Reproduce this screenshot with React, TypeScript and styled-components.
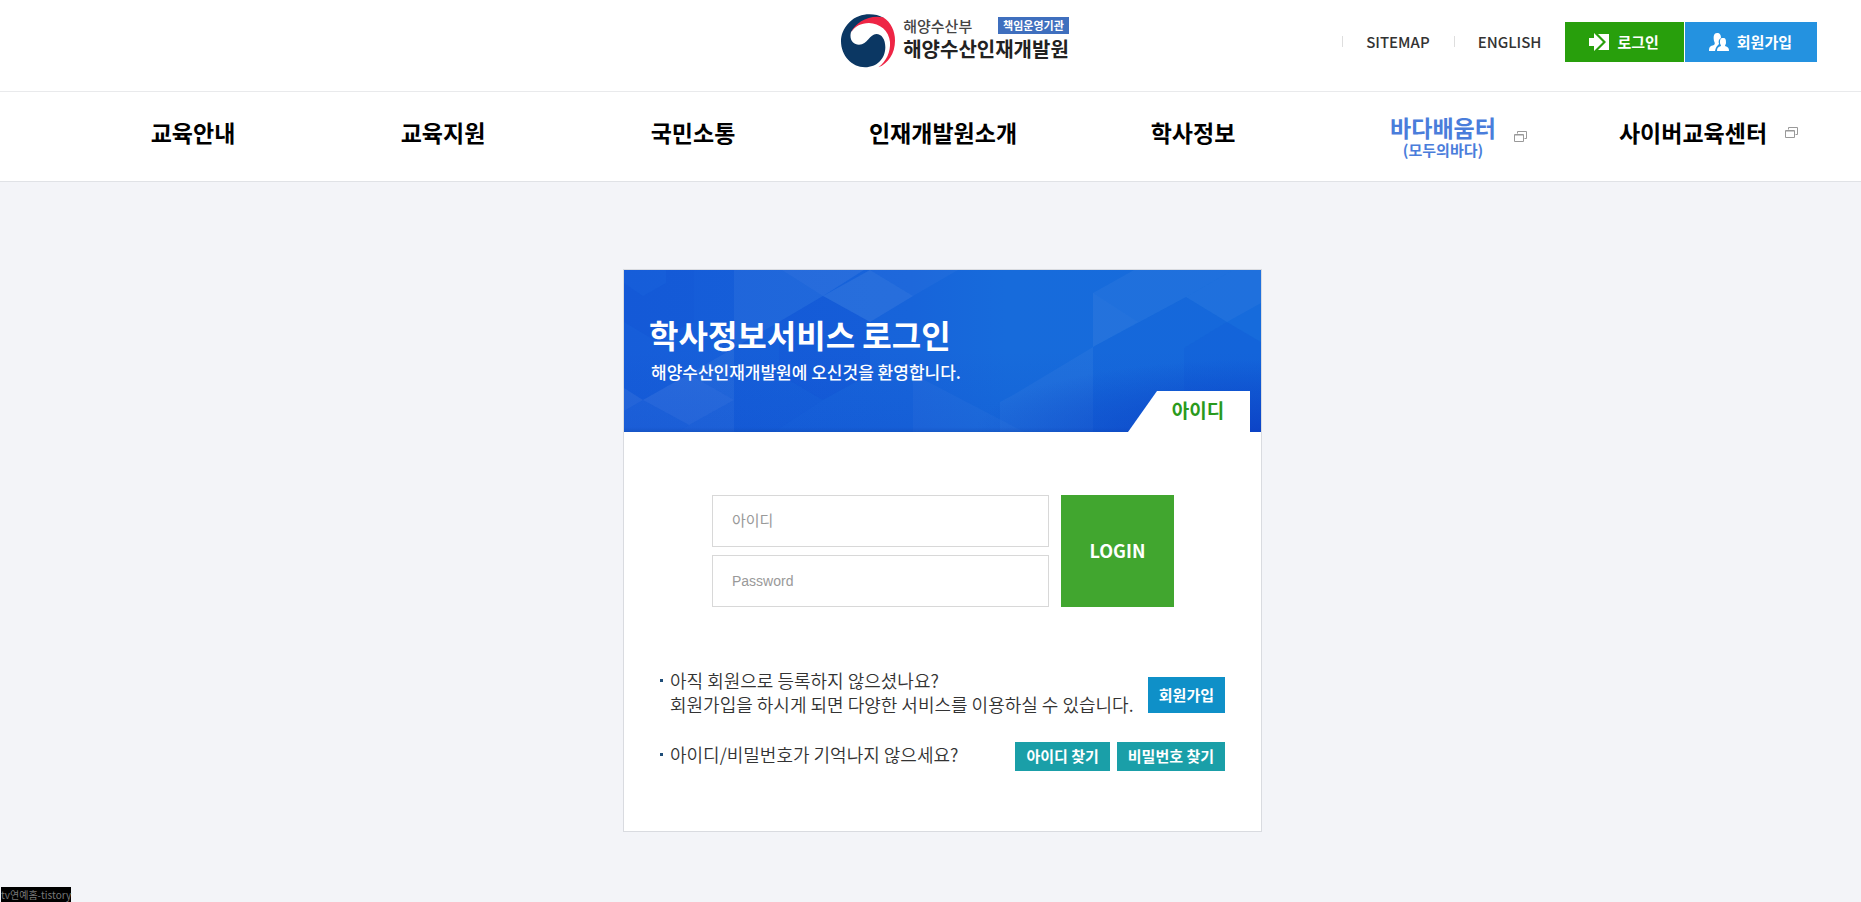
import React from "react";
import styled, { createGlobalStyle } from "styled-components";

const GlobalStyle = createGlobalStyle`
  *, *::before, *::after { box-sizing: border-box; }
  body {
    margin: 0;
    background: #f3f4f8;
    color: #444;
    font-family: "Noto Sans CJK KR", "Noto Sans", sans-serif;
  }
  a { color: inherit; text-decoration: none; }
  h1, p, ul { margin: 0; padding: 0; }
  ul { list-style: none; }
`;

const Page = styled.div`
  display: flex;
  flex-direction: column;
  min-height: 100vh;
`;

const Header = styled.header`
  display: grid;
  grid-template-columns: 1fr auto 1fr;
  height: 92px;
  padding: 0 44px 0 93px;
  background: #fff;
  border-bottom: 1px solid #e9eaec;
`;

const Logo = styled.a`
  grid-column: 2;
  display: flex;
  gap: 8px;
  align-self: start;
  padding-top: 14px;
`;

const LogoText = styled.span`
  display: flex;
  flex-direction: column;
`;

const LogoTop = styled.span`
  display: flex;
  align-items: center;
  justify-content: space-between;
  height: 22px;
  font-size: 15px;
  font-weight: 500;
  color: #444;
`;

const Badge = styled.span`
  padding: 0 5px;
  background: #3f6fbe;
  color: #fff;
  font-size: 11px;
  font-weight: 700;
  line-height: 17px;
`;

const LogoName = styled.strong`
  font-size: 20px;
  font-weight: 700;
  line-height: 26px;
  color: #222;
`;

const Utility = styled.nav`
  display: flex;
  justify-content: flex-end;
  align-items: center;
  align-self: start;
  height: 40px;
  margin-top: 22px;
`;

const UtilityLink = styled.a`
  display: flex;
  align-items: center;
  padding: 0 24px 2px 0;
  color: #333;
  font-size: 15px;
  font-weight: 500;
  white-space: nowrap;

  &::before {
    content: "";
    width: 1px;
    height: 11px;
    margin-right: 23px;
    background: #dedede;
  }
`;

const UtilityButton = styled.a<{ $color: string }>`
  display: flex;
  align-items: center;
  gap: 8px;
  height: 40px;
  padding: 0 25px 1px 24px;
  margin-right: 1px;
  background: ${(p) => p.$color};
  color: #fff;
  font-size: 15px;
  font-weight: 700;
  white-space: nowrap;

  &:last-child { margin-right: 0; }
`;

const MainNav = styled.nav`
  background: #fff;
  border-bottom: 1px solid #e0e2e6;
`;

const MenuList = styled.ul`
  display: flex;
  height: 89px;
  padding: 0 43px 0 68px;
`;

const MenuItem = styled.li<{ $stacked: boolean }>`
  flex: 1;
  display: grid;
  grid-template-columns: 1fr auto 1fr;
  align-items: center;
  padding-bottom: ${(p) => (p.$stacked ? 0 : 9)}px;
`;

const MenuLink = styled.a<{ $accent?: boolean }>`
  grid-column: 2;
  display: flex;
  flex-direction: column;
  align-items: center;
  color: ${(p) => (p.$accent ? "#4a7ddb" : "#000")};
  font-size: 23px;
  font-weight: 700;
  line-height: 26px;
  white-space: nowrap;

  small {
    font-size: 15px;
    font-weight: 700;
    line-height: 20px;
  }
`;

const NewWindow = styled.svg`
  width: 13px;
  height: 11px;
  margin-left: 18px;
`;

const Main = styled.main`
  flex: 1;
  display: flex;
  justify-content: center;
  align-items: flex-start;
  padding: 87px 0 40px 24px;
`;

const Card = styled.section`
  width: 639px;
  background: #fff;
  border: 1px solid #d9dbe0;
`;

const Banner = styled.div`
  position: relative;
  height: 162px;
  padding: 41px 25px 0;
  color: #fff;
  overflow: hidden;
`;

const BannerArt = styled.svg`
  position: absolute;
  inset: 0;
  width: 100%;
  height: 100%;
`;

const Title = styled.h1`
  position: relative;
  font-size: 32px;
  font-weight: 700;
  line-height: 46px;
`;

const Subtitle = styled.p`
  position: relative;
  padding-left: 2px;
  font-size: 17px;
  font-weight: 500;
  line-height: 30px;
`;

const Tab = styled.a`
  position: absolute;
  right: 11px;
  bottom: 0;
  width: 122px;
  height: 41px;
  padding-left: 18px;
  background: #fff;
  clip-path: polygon(29px 0, 100% 0, 100% 100%, 0 100%);
  color: #2a9a1c;
  font-size: 19px;
  font-weight: 700;
  line-height: 38px;
  text-align: center;
`;

const LoginForm = styled.form`
  display: flex;
  gap: 12px;
  padding: 63px 87px 0 88px;
`;

const Fields = styled.div`
  flex: 1;
  display: flex;
  flex-direction: column;
  gap: 8px;
`;

const Field = styled.input`
  width: 100%;
  height: 52px;
  padding: 0 19px;
  border: 1px solid #d8d8d8;
  background: #fff;
  color: #333;
  font-family: "Noto Sans CJK KR", sans-serif;
  font-size: 15px;

  &::placeholder { color: #999; opacity: 1; }

  &[type="text"] { padding-bottom: 3px; }

  &[type="password"] {
    font-family: "Liberation Sans", sans-serif;
    font-size: 14px;
  }
`;

const LoginButton = styled.button`
  width: 113px;
  padding: 0 0 3px;
  border: 0;
  background: #41a62f;
  color: #fff;
  font-family: inherit;
  font-size: 18px;
  font-weight: 700;
`;

const Notes = styled.ul`
  display: flex;
  flex-direction: column;
  gap: 26px;
  padding: 61px 36px 60px;
`;

const Note = styled.li`
  display: flex;
  justify-content: space-between;
  align-items: flex-start;
`;

const NoteText = styled.p`
  position: relative;
  padding-left: 10px;
  color: #333;
  font-size: 18px;
  font-weight: 350;
  line-height: 24px;
  white-space: nowrap;

  &::before {
    content: "";
    position: absolute;
    left: 0;
    top: 11px;
    width: 3px;
    height: 3px;
    background: #1f4e79;
  }
`;

const Actions = styled.div`
  display: flex;
  gap: 7px;
`;

const ActionButton = styled.button<{ $tall?: boolean }>`
  height: ${(p) => (p.$tall ? 36 : 29)}px;
  margin-top: ${(p) => (p.$tall ? 9 : 0)}px;
  padding: 0 11px 2px;
  border: 0;
  background: ${(p) => (p.$tall ? "#0f90c8" : "#1a9fa8")};
  color: #fff;
  font-family: inherit;
  font-size: 15px;
  font-weight: 700;
  white-space: nowrap;
`;

const Tag = styled.a`
  align-self: flex-start;
  margin-left: 1px;
  background: #000;
  color: #777;
  font-size: 10px;
  line-height: 15px;
`;

const Emblem = () => (
  <svg width="54" height="54" viewBox="0 0 162 162" aria-hidden="true">
    <path
      d="M128 11C96-6 52-2 26 24C6 44 0 64 0 82C0 124 32 160 72 160C108 160 133 134 133 100C133 76 122 60 106 60C86 60 80 92 54 92C36 92 24 76 30 54C50 22 84 12 128 11Z"
      fill="#0b3763"
    />
    <path
      d="M29 57C44 24 84 2 126 10C150 24 162 52 162 80C162 118 142 148 112 160C136 142 149 114 147 84C144 50 116 28 84 27C60 27 40 38 29 57Z"
      fill="#ee2545"
    />
  </svg>
);

const LoginIcon = () => (
  <svg width="20" height="18" viewBox="0 0 20 18" fill="#fff" aria-hidden="true">
    <path d="M0 5H5V0L14 9L5 18V13H0Z" />
    <path d="M9 1H20V17H9L11 15L17 9Z" />
  </svg>
);

const MembersIcon = () => (
  <svg width="20" height="18" viewBox="0 0 20 18" fill="#fff" aria-hidden="true">
    <path d="M8 0C11 0 12 2 12 5C10 6 9 8 10 11C8 13 7 14 6 18H0C0 14 1 13 5 12C6 11 6 10 5 8C4 3 5 0 8 0Z" />
    <path d="M14 5C17 5 17 7 17 10C17 11 16 12 16 13C19 14 20 15 20 18H8C8 15 9 14 12 13C12 12 11 11 11 10C11 7 11 5 14 5Z" />
  </svg>
);

const NewWindowIcon = () => (
  <NewWindow viewBox="0 0 13 11" fill="none" stroke="#999" aria-hidden="true">
    <path d="M3.5 2.5V.5H12.5V7.5H10.5" />
    <path d="M.5 3.5H9.5V10.5H.5Z" />
    <path d="M1 4H9" />
  </NewWindow>
);

const BannerPattern = () => (
  <BannerArt viewBox="0 0 637 162" preserveAspectRatio="none" aria-hidden="true">
    <defs>
      <linearGradient id="base" x1="0" y1="0" x2="1" y2="0">
        <stop offset="0" stopColor="#165dd9" />
        <stop offset=".45" stopColor="#1764da" />
        <stop offset=".6" stopColor="#176bdb" />
        <stop offset="1" stopColor="#166bdc" />
      </linearGradient>
      <linearGradient id="shade" x1="0" y1="0" x2="0" y2="1">
        <stop offset=".5" stopColor="#0b3fc4" stopOpacity="0" />
        <stop offset=".97" stopColor="#0b3fc4" stopOpacity=".14" />
        <stop offset="1" stopColor="#0b3fa4" stopOpacity=".4" />
      </linearGradient>
      <radialGradient id="corner" cx="1" cy="1" r=".45">
        <stop offset="0" stopColor="#0b3fc4" stopOpacity=".85" />
        <stop offset="1" stopColor="#0b3fc4" stopOpacity="0" />
      </radialGradient>
    </defs>
    <rect width="637" height="162" fill="url(#base)" />
    <g fill="#fff">
      <path d="M110 0H240L199 26L155 52L110 78Z" opacity=".04" />
      <path d="M158 0H240L199 26Z" opacity=".03" />
      <path d="M199 26L246 0L289 26L246 52Z" opacity=".07" />
      <path d="M246 0H334L289 26Z" opacity=".03" />
      <path d="M19 130L65 104L110 130L65 155Z" opacity=".08" />
      <path d="M65 104L110 78V130Z" opacity=".05" />
      <path d="M0 118L19 130L0 141Z" opacity=".07" />
      <path d="M0 141L19 130L65 155L54 162H0Z" opacity=".03" />
      <path d="M65 155L110 130V162H54Z" opacity=".04" />
      <path d="M289 104L400 162H289Z" opacity=".03" />
      <path d="M469 23L510 0H609L562 27L469 77Z" opacity=".04" />
      <path d="M469 23L514 52L469 77Z" opacity=".02" />
      <path d="M562 27L609 0H637V33L603 52Z" opacity=".04" />
      <path d="M389 125L469 77V162H376V132Z" opacity=".04" />
    </g>
    <g fill="#0a3fd0">
      <path d="M0 13L19 26L42 13V0H70V52L30 70L0 52Z" opacity=".12" />
      <path d="M70 0H110V52L88 62L70 52Z" opacity=".05" />
      <path d="M199 26L246 52V104L199 130L155 104V52Z" opacity=".16" />
      <path d="M110 78L155 52V104L199 130L150 162H110Z" opacity=".06" />
      <path d="M469 77L562 27L603 52L560 78V162H469Z" opacity=".06" />
      <path d="M560 78L603 52L637 72V162H560Z" opacity=".14" />
    </g>
    <rect width="637" height="162" fill="url(#shade)" />
    <rect width="637" height="162" fill="url(#corner)" />
  </BannerArt>
);

const menu: { label: string; sub?: string; external?: boolean }[] = [
  { label: "교육안내" },
  { label: "교육지원" },
  { label: "국민소통" },
  { label: "인재개발원소개" },
  { label: "학사정보" },
  { label: "바다배움터", sub: "(모두의바다)", external: true },
  { label: "사이버교육센터", external: true },
];

export default function App() {
  return (
    <>
      <GlobalStyle />
      <Page>
        <Header>
          <Logo href="#">
            <Emblem />
            <LogoText>
              <LogoTop>
                해양수산부 <Badge>책임운영기관</Badge>
              </LogoTop>
              <LogoName>해양수산인재개발원</LogoName>
            </LogoText>
          </Logo>
          <Utility>
            <UtilityLink href="#">SITEMAP</UtilityLink>
            <UtilityLink href="#">ENGLISH</UtilityLink>
            <UtilityButton href="#" $color="#289f0c">
              <LoginIcon />
              로그인
            </UtilityButton>
            <UtilityButton href="#" $color="#2492e0">
              <MembersIcon />
              회원가입
            </UtilityButton>
          </Utility>
        </Header>
        <MainNav>
          <MenuList>
            {menu.map((item) => (
              <MenuItem key={item.label} $stacked={Boolean(item.sub)}>
                <MenuLink href="#" $accent={Boolean(item.sub)}>
                  {item.label}
                  {item.sub && <small>{item.sub}</small>}
                </MenuLink>
                {item.external && <NewWindowIcon />}
              </MenuItem>
            ))}
          </MenuList>
        </MainNav>
        <Main>
          <Card>
            <Banner>
              <BannerPattern />
              <Title>학사정보서비스 로그인</Title>
              <Subtitle>해양수산인재개발원에 오신것을 환영합니다.</Subtitle>
              <Tab href="#">아이디</Tab>
            </Banner>
            <LoginForm onSubmit={(e) => e.preventDefault()}>
              <Fields>
                <Field type="text" placeholder="아이디" aria-label="아이디" />
                <Field type="password" placeholder="Password" aria-label="Password" />
              </Fields>
              <LoginButton type="submit">LOGIN</LoginButton>
            </LoginForm>
            <Notes>
              <Note>
                <NoteText>
                  아직 회원으로 등록하지 않으셨나요?
                  <br />
                  회원가입을 하시게 되면 다양한 서비스를 이용하실 수 있습니다.
                </NoteText>
                <ActionButton type="button" $tall>
                  회원가입
                </ActionButton>
              </Note>
              <Note>
                <NoteText>아이디/비밀번호가 기억나지 않으세요?</NoteText>
                <Actions>
                  <ActionButton type="button">아이디 찾기</ActionButton>
                  <ActionButton type="button">비밀번호 찾기</ActionButton>
                </Actions>
              </Note>
            </Notes>
          </Card>
        </Main>
        <Tag href="#">tv연예홈-tistory</Tag>
      </Page>
    </>
  );
}
